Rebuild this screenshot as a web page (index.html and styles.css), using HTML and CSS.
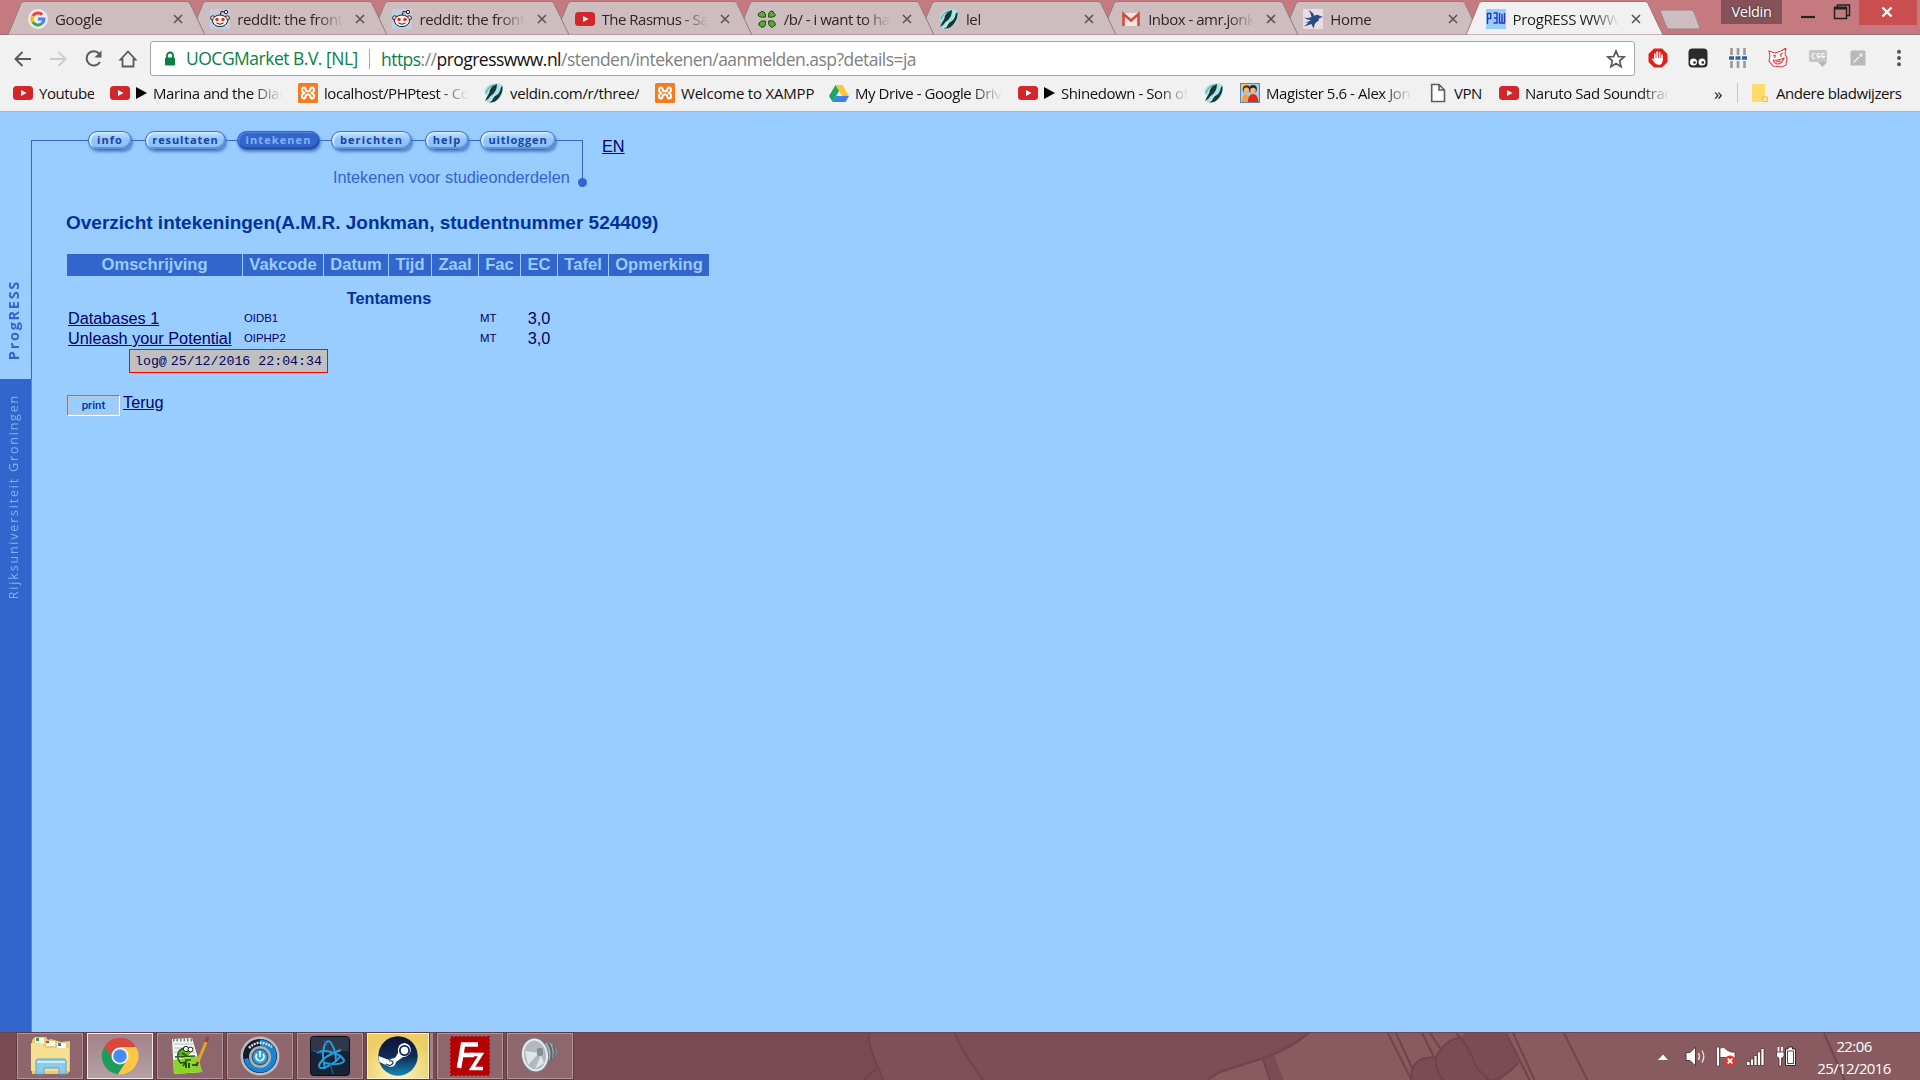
FILE: index.html
```html
<!DOCTYPE html>
<html lang="nl">
<head>
<meta charset="utf-8">
<title>ProgRESS WWW</title>
<link rel="stylesheet" href="styles.css">
</head>
<body>
<svg class="defs" width="0" height="0">
  <defs>
    <symbol id="tab" viewBox="0 0 198 35"><path d="M0 35 L13 3.5 Q14 1.5 16.500 1.500 H179 Q181 1.500 182 3.500 L197 35Z"/></symbol>
    <symbol id="x" viewBox="0 0 10 10"><path d="M1 1L9 9M9 1L1 9" stroke="#5b5355" stroke-width="1.6"/></symbol>
    <symbol id="yt" viewBox="0 0 20 20"><rect y="3" width="20" height="14" rx="3.500" fill="#d2262a"/><path d="M8 7L13.500 10L8 13Z" fill="#fff"/></symbol>
    <symbol id="reddit" viewBox="0 0 20 20"><rect width="20" height="20" fill="#c3cce0"/><path d="M10.500 6L11 2.500L15 3" fill="none" stroke="#222"/><circle cx="16" cy="3" r="1.700" fill="#eee" stroke="#222"/><circle cx="2.800" cy="9" r="2.200" fill="#eee" stroke="#222"/><circle cx="17.200" cy="9" r="2.200" fill="#eee" stroke="#222"/><ellipse cx="10" cy="11.800" rx="7.500" ry="5.800" fill="#f6f3f3" stroke="#222"/><circle cx="7" cy="10.500" r="1.700" fill="#f21"/><circle cx="13" cy="10.500" r="1.700" fill="#f21"/><path d="M6.500 14Q10 16.500 13.500 14" fill="none" stroke="#222"/></symbol>
    <symbol id="feather" viewBox="0 0 20 20"><path d="M0.500 8Q2 1.500 10 .5Q16 -.5 18.500 2Q20.500 9 16 15Q11 20 4 19.500Q1 17 4 12.500Q0 13 .5 8Z" fill="#a5e6e2"/><path d="M13 1Q6 3 5.500 9.500Q3 13.500 1 18Q4 17 6.500 13Q13 9 13 1Z" fill="#17383a"/><path d="M18.500 3Q15 5 14.500 9Q10 12 7.500 18L5 19.500Q12 20 15.500 14Q19 9 18.500 3Z" fill="#17383a"/><path d="M11 2Q4 3 2 10" fill="none" stroke="#4e8486" stroke-width=".9"/><path d="M16 4Q16 10 10 13Q8 15 7 18" fill="none" stroke="#b5f0ee" stroke-width="1.300"/></symbol>
    <symbol id="xampp" viewBox="0 0 20 20"><rect width="20" height="20" rx="1.500" fill="#f47b20"/><path d="M7.500 6Q7.500 4.500 6 4.500Q4 4.500 4 7Q4 9 6 9.500Q6.800 10 6 10.500Q4 11 4 13Q4 15.500 6 15.500Q7.500 15.500 7.500 13.500Q8 11.500 10 11.500T12.500 13.500Q12.500 15.500 14 15.500Q16 15.500 16 13Q16 11 14 10.500Q13.200 10 14 9.500Q16 9 16 7Q16 4.500 14 4.500Q12.500 4.500 12.500 6Q12 8.500 10 8.500T7.500 6Z" fill="none" stroke="#fff" stroke-width="2"/></symbol>
  </defs>
</svg>

<header class="browser">
  <div class="tabstrip">
    <nav class="tabs">
      <div class="tab"><svg class="shape"><use href="#tab"/></svg>
        <svg class="fav" viewBox="0 0 20 20"><circle cx="10" cy="10" r="10" fill="#f2e9ea"/><g fill="none" stroke-width="3"><path d="M14.200 5.600A6 6 0 0 0 4.800 7" stroke="#e94335"/><path d="M4.800 7A6 6 0 0 0 4.800 13" stroke="#f9bb05"/><path d="M4.800 13A6 6 0 0 0 13.800 14.700" stroke="#34a853"/><path d="M13.800 14.700A6 6 0 0 0 16 10H10" stroke="#4285f4"/></g></svg>
        <span class="label">Google</span><svg class="close"><use href="#x"/></svg></div>
      <div class="tab"><svg class="shape"><use href="#tab"/></svg><svg class="fav"><use href="#reddit"/></svg><span class="label">reddit: the front page</span><svg class="close"><use href="#x"/></svg></div>
      <div class="tab"><svg class="shape"><use href="#tab"/></svg><svg class="fav"><use href="#reddit"/></svg><span class="label">reddit: the front page</span><svg class="close"><use href="#x"/></svg></div>
      <div class="tab"><svg class="shape"><use href="#tab"/></svg><svg class="fav"><use href="#yt"/></svg><span class="label tight">The Rasmus - Sail</span><svg class="close"><use href="#x"/></svg></div>
      <div class="tab"><svg class="shape"><use href="#tab"/></svg>
        <svg class="fav" viewBox="0 0 20 20"><g fill="#5dab2c" stroke="#1f4716"><path d="M8.500 8Q2 9 1 6Q1 4 3 4Q4 1 7 3Q9 5 8.500 8ZM11.500 8Q11 3 14 2Q17 2 16.500 4Q19 5 18 7Q15 9 11.500 8ZM8.500 12Q9 18 6 18Q4 19 3.500 17Q1 17 2 14Q4 11 8.500 12ZM11.500 12Q17 11 18 14Q19 17 17 17Q16 19 14 18Q11 17 11.500 12Z"/></g></svg>
        <span class="label tight">/b/ - i want to have</span><svg class="close"><use href="#x"/></svg></div>
      <div class="tab"><svg class="shape"><use href="#tab"/></svg><svg class="fav"><use href="#feather"/></svg><span class="label">lel</span><svg class="close"><use href="#x"/></svg></div>
      <div class="tab"><svg class="shape"><use href="#tab"/></svg>
        <svg class="fav" viewBox="0 0 20 20"><rect x="2" y="4" width="16" height="13" fill="#eee7e7"/><path d="M2.500 17V5L10 11.500L17.500 5V17" fill="none" stroke="#d54b3d" stroke-width="2.600"/></svg>
        <span class="label tight">Inbox - amr.jonkman</span><svg class="close"><use href="#x"/></svg></div>
      <div class="tab"><svg class="shape"><use href="#tab"/></svg>
        <svg class="fav" viewBox="0 0 20 20"><rect width="20" height="20" fill="#eadde2"/><path d="M5.500 1Q10 3 11.500 7Q14 5 16 6.500L20 8L16.500 9Q16 12 13 13.500Q11 15 11 19.500Q9 17.500 8.500 15L1 17.500L5.500 13.500L2 13.500Q6 12.500 8 11Q4 11 1 8.500Q5 9.500 8.500 8Q8 4 5.500 1Z" fill="#2a4a86"/></svg>
        <span class="label">Home</span><svg class="close"><use href="#x"/></svg></div>
      <div class="tab active"><svg class="shape"><use href="#tab"/></svg>
        <svg class="fav" viewBox="0 0 20 20"><rect width="20" height="20" fill="#99ccff"/><path d="M1.500 15V4.500H4.700V9.500H2M7.500 4H11V14H7.500M8 9H11M13.500 4V14H18.500V4M16 5V14" fill="none" stroke="#2437c4" stroke-width="1.400"/></svg>
        <span class="label">ProgRESS WWW</span><svg class="close"><use href="#x"/></svg></div>
    </nav>
    <svg class="newtab" viewBox="0 0 42 21"><path d="M3 1H31Q34 1 35 3L40.500 18Q41 20 39 20H11Q8.500 20 7.500 18L1.500 3Q1 1 3 1Z" fill="#cdbdc0" stroke="#9d868a"/></svg>
    <div class="wincontrols">
      <span class="user">Veldin</span>
      <svg class="wbtns" viewBox="0 0 77 25"><path d="M19 17H33" stroke="#222" stroke-width="2.200"/><path d="M55.500 7V5H67.500V15.500H65" fill="none" stroke="#222" stroke-width="1.500"/><path d="M52.500 8H64.500V18.500H52.500Z" fill="none" stroke="#222" stroke-width="1.500"/><path d="M52 8H65" stroke="#222" stroke-width="3"/></svg>
      <span class="wclose"><svg viewBox="0 0 12 12"><path d="M1.500 1.500L10.500 10.500M10.500 1.500L1.500 10.500" stroke="#fff" stroke-width="2.300"/></svg></span>
    </div>
  </div>

  <div class="toolbar">
    <svg class="navicons" viewBox="0 0 142 34" fill="none" stroke="#5a5a5a" stroke-width="2">
      <path d="M31 17.500H16M22.500 10.500L15.500 17.500L22.500 24.500"/>
      <path d="M50 17.500H65M58.500 10.500L65.500 17.500L58.500 24.500" stroke="#ccc"/>
      <path d="M99.500 12.500A7.200 7.200 0 1 0 100 20.500"/><path d="M101.500 9V16H94.500Z" fill="#5a5a5a" stroke="none"/>
      <path d="M120.500 18L128 10L135.500 18H133.500V25H122.500V18Z" stroke-width="1.800"/>
    </svg>
    <div class="omnibox">
      <svg class="lock" viewBox="0 0 12 16"><path d="M3 7V4.500a3 3 0 0 1 6 0V7" fill="none" stroke="#0b8043" stroke-width="1.800"/><rect x="1" y="6.500" width="10" height="8" rx="1" fill="#0b8043"/></svg>
      <span class="cert">UOCGMarket B.V. [NL]</span>
      <span class="url"><span class="scheme">https</span>://<b>progresswww.nl</b>/stenden/intekenen/aanmelden.asp?details=ja</span>
      <svg class="star" viewBox="0 0 20 20"><path d="M10 2L12.300 7.500L18.200 8L13.700 11.900L15.100 17.700L10 14.600L4.900 17.700L6.300 11.900L1.800 8L7.700 7.500Z" fill="none" stroke="#555" stroke-width="1.700"/></svg>
    </div>
    <div class="exts">
      <svg viewBox="0 0 20 20"><path d="M6 0.500H14L19.500 6V14L14 19.500H6L0.500 14V6Z" fill="#e1201b"/><path d="M6.800 12V6M9.200 11V4M11.600 11V4.500M14 12V7" stroke="#fff" stroke-width="1.600" stroke-linecap="round"/><path d="M6 10H14.800Q15 16.500 11 17Q8 17 6 14L3.800 11Q4.500 10 6 11.500Z" fill="#fff"/></svg>
      <svg viewBox="0 0 20 20"><rect x=".5" y=".5" width="19" height="19" rx="4" fill="#2b2b2b"/><circle cx="5.500" cy="14" r="3.500" fill="#fff"/><circle cx="14" cy="14" r="3.500" fill="#fff"/><circle cx="6.500" cy="14.500" r="1.300" fill="#222"/><circle cx="14.800" cy="14.500" r="1.300" fill="#222"/></svg>
      <svg viewBox="0 0 20 20"><path d="M3.500 0V20M10 0V20M16.500 0V20" stroke="#999" stroke-width="2.600"/><path d="M1 10H19" stroke="#f1f1f1" stroke-width="6"/><path d="M1 10H19" stroke="#2e64a5" stroke-width="3.600" stroke-dasharray="5 1.500"/></svg>
      <svg viewBox="0 0 20 20" fill="none" stroke="#e03e42" stroke-width="1.100"><path d="M1 3L7 5L13 3L18 0L17 6L19 10L18 17L14 19L5 18L1 13L2 8Z" fill="#fff"/><path d="M5 8L8 7M12 7L15 5M7 8V10M13 7V9M5 12Q10 13 16 10Q14 16 9 16Q6 15 5 12M8 14L13 13"/></svg>
      <svg viewBox="0 0 20 20"><rect x="1" y="2" width="18" height="12" rx="2" fill="#c6c6c6"/><path d="M7 6Q4 5 4 8T7 10M12 6Q9 5 9 7T11.500 8.500T9 10M16.500 6Q13.500 5 13.500 7T16 8.500T13.500 10" fill="none" stroke="#fff" stroke-width="1.100"/><path d="M10 14H19L14.500 19Z" fill="#b5b5b5"/></svg>
      <svg viewBox="0 0 20 20"><rect x="2.500" y="2.500" width="15" height="15" rx="1.500" fill="#b8b8b8"/><path d="M5.500 14.500L11 9M13 5V9M11 7H15" stroke="#f4f4f4" stroke-width="1.200"/></svg>
      <svg viewBox="0 0 20 20" fill="#555"><circle cx="11" cy="3.700" r="2"/><circle cx="11" cy="10" r="2"/><circle cx="11" cy="16.300" r="2"/></svg>
    </div>
  </div>

  <div class="bookmarks">
    <a><svg><use href="#yt"/></svg><span>Youtube</span></a>
    <a><svg><use href="#yt"/></svg><i></i><span>Marina and the Diamonds</span></a>
    <a><svg><use href="#xampp"/></svg><span>localhost/PHPtest - Con</span></a>
    <a><svg><use href="#feather"/></svg><span>veldin.com/r/three/</span></a>
    <a><svg><use href="#xampp"/></svg><span>Welcome to XAMPP</span></a>
    <a><svg viewBox="0 0 20 20"><path d="M6.500 2H13.500L20 13H13Z" fill="#fbc92f"/><path d="M6.500 2L10 8L3.500 19L0 13Z" fill="#1da362"/><path d="M3.500 19L7 13H20L16.500 19Z" fill="#3f7fe8"/></svg><span>My Drive - Google Drive</span></a>
    <a><svg><use href="#yt"/></svg><i></i><span>Shinedown - Son of Sam</span></a>
    <a><svg><use href="#feather"/></svg></a>
    <a><svg viewBox="0 0 20 20"><rect x=".5" y=".5" width="19" height="19" fill="#9fd0ee" stroke="#58a"/><path d="M1 1H8V6H1ZM1 12H6V19H1Z" fill="#f3d04c"/><circle cx="6.500" cy="6" r="3.800" fill="#5a2f22"/><circle cx="6.500" cy="7.300" r="2.700" fill="#efb78c"/><circle cx="13" cy="6" r="3.900" fill="#3d2417"/><circle cx="13" cy="7.500" r="2.800" fill="#f0b58a"/><path d="M2 19Q2 11 6 11Q9 11 9 19Z" fill="#f0a04a"/><path d="M8 19Q8 11 13 11T18.500 19Z" fill="#e3281c"/></svg><span>Magister 5.6 - Alex Jonk</span></a>
    <a><svg viewBox="0 0 20 20"><path d="M3.700 1.500H11L16.500 7V18.500H3.700ZM11 1.500V7H16.500" fill="#fff" stroke="#5c5c5c" stroke-width="1.600"/></svg><span>VPN</span></a>
    <a><svg><use href="#yt"/></svg><span>Naruto Sad Soundtrack</span></a>
    <a class="more">»</a>
    <a class="other"><svg viewBox="0 0 20 20"><path d="M2 1H15V14H17.500V19H2Z" fill="#fddc6b"/><path d="M12.500 14H17.500V18.500H13Z" fill="#ffe99a" stroke="#e9c04c"/></svg><span>Andere bladwijzers</span></a>
  </div>
</header>

<main class="page">
  <aside class="side">
    <div class="brand"><span>ProgRESS</span></div>
    <div class="uni"><span>Rijksuniversiteit Groningen</span></div>
  </aside>
  <div class="content">
    <div class="menurow">
      <nav class="menu">
        <a>info</a><a>resultaten</a><a class="on">intekenen</a><a>berichten</a><a>help</a><a>uitloggen</a>
      </nav>
      <a class="lang">EN</a>
    </div>
    <p class="sub">Intekenen voor studieonderdelen</p>
    <h1>Overzicht intekeningen(A.M.R. Jonkman, studentnummer 524409)</h1>
    <table>
      <colgroup><col class="c1"><col class="c2"><col class="c3"><col class="c4"><col class="c5"><col class="c6"><col class="c7"><col class="c8"><col class="c9"></colgroup>
      <thead><tr><th>Omschrijving</th><th>Vakcode</th><th>Datum</th><th>Tijd</th><th>Zaal</th><th>Fac</th><th>EC</th><th>Tafel</th><th>Opmerking</th></tr></thead>
      <tbody>
        <tr class="group"><td colspan="9">Tentamens</td></tr>
        <tr><td><a>Databases 1</a></td><td class="s">OIDB1</td><td></td><td></td><td></td><td class="s">MT</td><td class="ec">3,0</td><td></td><td></td></tr>
        <tr><td><a>Unleash your Potential</a></td><td class="s">OIPHP2</td><td></td><td></td><td></td><td class="s">MT</td><td class="ec">3,0</td><td></td><td></td></tr>
      </tbody>
    </table>
    <div class="log"><span>log@</span><span>25/12/2016 22:04:34</span></div>
    <div class="actions"><button>print</button><a>Terug</a></div>
  </div>
</main>

<footer class="taskbar">
  <svg class="wall" viewBox="0 0 1920 48" preserveAspectRatio="none">
    <path d="M868 0Q866 10 878 34L884 48H984L970 20L955 0Z" fill="#805058"/>
    <path d="M955 0L966 24L984 48H1206Q1214 38 1226 35L1262 24Q1290 12 1309 0Z" fill="#7d4e55"/>
    <path d="M1309 0Q1290 14 1264 24L1220 38Q1212 42 1206 48H1920V0Z" fill="#875b60"/>
    <path d="M1263 26L1270 48H1284L1274 22ZM1412 48Q1410 24 1436 24Q1444 8 1462 4L1465 0H1507L1519 30L1500 48Z" fill="#7c4c54"/>
    <g fill="none" stroke="#70444a" stroke-width="2"><path d="M870 0Q866 8 878 34L884 48M878 34L862 48M955 0Q962 20 984 48M1309 0Q1290 16 1264 25L1220 39L1206 48M1263 26L1270 48M1388 0L1412 48M1396 0L1413 37M1422 0L1434 24M1430 0L1440 15M1412 48Q1408 24 1436 24Q1444 8 1460 4L1456 0M1436 24Q1434 36 1444 48M1460 4Q1468 12 1476 34L1490 48Q1506 44 1518 30M1506 0L1530 48M1513 0L1535 48M1564 0L1588 48M1824 0L1845 48"/></g>
  </svg>
  <div class="apps">
    <div class="app"><svg viewBox="0 0 40 40"><path d="M2 4L5 1H16L18 4L21 3L31 6L40 5V35L37 38H2Z" fill="#e7cc72"/><path d="M5 2H14V8H5Z" fill="#fbfbf0"/><path d="M16 5H25V10H16Z" fill="#fff"/><path d="M27 7H36V12H27Z" fill="#fff"/><path d="M6 2H9V5H6Z" fill="#3a9d43"/><path d="M16 5H19V7H16Z" fill="#d43b2c"/><path d="M28 7H31V10H28Z" fill="#287cd4"/><path d="M1 7H11L16 12H39V35H1Z" fill="#f5df91"/><path d="M6 25Q6 23 8 23H34Q36 23 36 25V38H29V32H14V38H6Z" fill="#8ccbe9" stroke="#5da6cd"/><path d="M7 25H35V27H7Z" fill="#cbeefa"/></svg></div>
    <div class="app current"><svg viewBox="0 0 40 40"><path d="M4.100 10.900A18.400 18.400 0 0 0 18 38.300L28 22L20 20Z" fill="#1e9c5c"/><path d="M36 10.900A18.400 18.400 0 0 1 18 38.300L28 23L22 10.900Z" fill="#fbc745"/><path d="M4.100 10.900A18.400 18.400 0 0 1 36 10.900H20L11.500 20Z" fill="#d9483b"/><circle cx="20" cy="20" r="8.500" fill="#fff"/><circle cx="20" cy="20" r="6.800" fill="#4a8af4"/></svg></div>
    <div class="app"><svg viewBox="0 0 40 40"><path d="M2 3L22 2L32 36L4 38Z" fill="#f5f8ef"/><path d="M3 24L28 20L32 36L4 38Z" fill="#8bd42b"/><path d="M4 8H23M4 12H24M4 16H25" stroke="#a9bfd0"/><path d="M3 4H22" stroke="#777" stroke-width="3" stroke-dasharray="1.500 2"/><path d="M8 19Q8 12 14 12L21 16Q19 21 12 22Z" fill="#61b51d"/><path d="M15 12Q9 13 8 18Q7 24 11 27L16 26L13 30M5 21L25 20M12 17L17 20M15 24H21" fill="none" stroke="#235c16" stroke-width="1.700"/><circle cx="16" cy="13" r="2.600" fill="#fff" stroke="#222"/><circle cx="20.500" cy="13.500" r="2.400" fill="#fff" stroke="#222"/><path d="M16 27V32M19 27V32M22 29H28" stroke="#143b0c" stroke-width="1.700"/><path d="M37 4L27 28" stroke="#e7a520" stroke-width="3"/><path d="M38 1L36 6" stroke="#a34138" stroke-width="3.500"/><path d="M28 26L26 30" stroke="#532" stroke-width="2"/></svg></div>
    <div class="app"><svg viewBox="0 0 40 40"><circle cx="20" cy="20" r="19.500" fill="#bcbec2"/><circle cx="20" cy="20" r="17" fill="#101b2b"/><path d="M4 23A16.500 16.500 0 0 0 20 36.500V32Q11 31 8 22ZM20 3.500A16.500 16.500 0 0 1 20 36.500V30A10 10 0 0 0 20 10Z" fill="#1686d6"/><path d="M9 12Q19 2 32 11" fill="none" stroke="#ddd" stroke-width="2.500" stroke-dasharray="2 1"/><circle cx="20" cy="21" r="11" fill="#aeb4b9"/><circle cx="20" cy="21" r="8.500" fill="#455766"/><circle cx="20" cy="21" r="7" fill="#29a9e7"/><path d="M17 18A4 4 0 1 0 23 18M20 15V21" fill="none" stroke="#fff" stroke-width="1.700"/></svg></div>
    <div class="app"><svg viewBox="0 0 40 40"><rect x=".5" y=".5" width="39" height="39" rx="3" fill="#172334" stroke="#0a1019"/><path d="M1 3Q1 1 3 1H37Q39 1 39 3V15H1Z" fill="#30374a"/><g fill="none" stroke="#22a3e1" stroke-width="1.900"><path d="M15 33Q11 17 15 8Q18 3 21 7Q26 14 26 26"/><path d="M7 17Q14 13 24 17Q34 21 34 25Q31 30 14 27"/><path d="M31 14Q13 20 9 29Q9 34 16 31Q26 27 31 19"/></g><path d="M3 15L12 17M14 4L17 9M20 27L23 38" stroke="#0d74b5"/></svg></div>
    <div class="app alert"><svg viewBox="0 0 40 40"><defs><linearGradient id="st" x2="0" y2="1"><stop offset="0" stop-color="#101234"/><stop offset=".5" stop-color="#0d2b56"/><stop offset="1" stop-color="#1685b3"/></linearGradient></defs><circle cx="20" cy="20" r="19.700" fill="url(#st)"/><path d="M0.500 20L11 24Q14 22 17 22L20 17Q19 7 27 7Q34 9 32.500 16Q30 21 25 21L18 26Q17 32 11 30.500L1.500 26Z" fill="#fff"/><circle cx="26.500" cy="14.500" r="4.600" fill="#fff" stroke="#123058" stroke-width="1.800"/><path d="M8 28Q13 31 15 27Q15 24 11 25" fill="none" stroke="#123058" stroke-width="1.200"/></svg></div>
    <div class="app"><svg viewBox="0 0 40 40"><rect x="1" y="1" width="38" height="38" fill="#b40000" stroke="#b40000" stroke-width="2" stroke-dasharray="2.500 1.500"/><path d="M9 32L13 8.500H28M11 19H24" fill="none" stroke="#fff" stroke-width="4.600"/><path d="M20 18.500H31L22 32.500H33" fill="none" stroke="#fff" stroke-width="3.600"/></svg></div>
    <div class="app"><svg viewBox="0 0 40 40"><path d="M20 10L28 6Q36 8 37 16Q37 21 33 22L20 30Z" fill="#a7adb2" stroke="#777f86"/><path d="M28 7Q33 13 31 24M33 9Q36 15 34 21" fill="none" stroke="#5c646c" stroke-width="2"/><ellipse cx="15" cy="19" rx="13.500" ry="17" fill="#e9edf0" stroke="#777f86" transform="rotate(-8 15 19)"/><ellipse cx="15" cy="19" rx="11" ry="14.500" fill="#b2bac1" transform="rotate(-8 15 19)"/><path d="M5 15L19 17L8 29ZM15 33L21 19L24 27Z" fill="#dfe5e9"/><rect x="17" y="12" width="6" height="8" rx="2" fill="#868f97"/></svg></div>
  </div>
  <div class="tray">
    <svg viewBox="0 0 150 30" fill="#fff">
      <path d="M3 18L8 12.500L13 18Z"/>
      <path d="M31 10.500H35L40.500 5V24L35 18.500H31Z" stroke="#5a3539"/><path d="M43.500 11Q45.500 14.500 43.500 18M47 8.500Q50.500 14.500 47 20.500" fill="none" stroke="#ead9db" stroke-width="1.400"/>
      <path d="M61.500 5H64.500V24H61.500ZM65 6Q69 4 72 8Q76 11 80 10V17Q74 18 71 15.500L65 15.500Z" stroke="#5a3539" stroke-width=".8"/><circle cx="75" cy="19" r="5.500" fill="#dd3b2f"/><path d="M72.700 16.700L77.300 21.300M77.300 16.700L72.700 21.300" stroke="#fff" stroke-width="1.700"/>
      <path d="M91.500 19.500H95V23.500H91.500ZM95.500 17H98.500V23.500H95.500ZM99 13.500H102V23.500H99ZM102.500 10H105.500V23.500H102.500ZM106 6.500H109V23.500H106Z" stroke="#4a2d30" stroke-width=".7"/>
      <path d="M123.500 5V10M127 5V10" stroke="#fff" stroke-width="1.700"/><path d="M121.500 10H129V14Q128 16 126.500 16V24H124V16Q122.500 16 121.500 14Z" stroke="#4a2d30" stroke-width=".8"/><path d="M130.500 7H133V5H137.500V7H140.500V23.500H130.500Z" stroke="#3a2225"/><path d="M132.500 9H138.500V21.500H132.500Z" fill="#fff" stroke="#4a2d30" stroke-width=".9"/>
    </svg>
    <div class="clock"><span>22:06</span><span>25/12/2016</span></div>
  </div>
</footer>
</body>
</html>
```
FILE: styles.css
```css
* { box-sizing: border-box; }
body {
  margin: 0;
  width: 1920px;
  height: 1080px;
  overflow: hidden;
  display: flex;
  flex-direction: column;
  font-family: "Liberation Sans", Arial, sans-serif;
}
svg { display: block; flex: none; }
.defs { position: absolute; }

/* browser chrome */
.browser {
  height: 112px;
  flex: none;
  background: #f1f1f1;
  border-bottom: 1px solid #b6b4b0;
  font-family: "Open Sans", "Noto Sans", sans-serif;
  font-size: 15px;
  color: #111;
}
.tabstrip {
  height: 35px;
  display: flex;
  background: #c57a80;
  box-shadow: inset 0 -1px #8f7276;
}
.tabs { display: flex; padding-left: 8px; }
.tab {
  position: relative;
  isolation: isolate;
  width: 198.200px;
  height: 35px;
  margin-right: -16px;
  padding: 2px 0 0 20px;
  display: flex;
  align-items: center;
  color: #2e2528;
}
.tab:nth-child(1) { z-index: 8; }
.tab:nth-child(2) { z-index: 7; }
.tab:nth-child(3) { z-index: 6; }
.tab:nth-child(4) { z-index: 5; }
.tab:nth-child(5) { z-index: 4; }
.tab:nth-child(6) { z-index: 3; }
.tab:nth-child(7) { z-index: 2; }
.tab:nth-child(8) { z-index: 1; }
.tab.active { z-index: 9; color: #222; }
.shape {
  position: absolute;
  left: 0;
  top: 0;
  width: 198px;
  height: 35px;
  z-index: -1;
  fill: #cdbdbf;
  stroke: #98787c;
}
.active .shape { fill: #f1f1f1; }
.fav { width: 20px; height: 20px; }
.label {
  width: 105px;
  margin: 0 13px 0 7px;
  white-space: nowrap;
  overflow: hidden;
  letter-spacing: -0.35px;
  line-height: 20px;
  -webkit-mask-image: linear-gradient(90deg, #000 80px, transparent 106px);
  mask-image: linear-gradient(90deg, #000 80px, transparent 106px);
}
.label.tight { letter-spacing: -0.5px; }
.close { width: 10px; height: 10px; }
.newtab { width: 42px; height: 21px; margin: 9px 0 0 11px; }
.wincontrols { display: flex; margin-left: auto; padding-right: 3px; height: 25px; }
.user {
  width: 61px;
  height: 24px;
  background: #845258;
  color: #fff;
  font-size: 14.5px;
  line-height: 23px;
  text-align: center;
  letter-spacing: -0.3px;
  text-shadow: 0 0 2px #222;
}
.wbtns { width: 77px; height: 25px; }
.wclose {
  width: 58px;
  height: 25px;
  background: #c94f50;
  display: flex;
  align-items: center;
  justify-content: center;
}
.wclose svg { width: 12px; height: 12px; margin: 0 3px 2px 0; }

.toolbar { display: flex; height: 41px; padding-top: 6px; }
.navicons { width: 142px; height: 35px; }
.omnibox {
  width: 1485px;
  height: 35px;
  margin-left: 8px;
  padding: 0 8px 0 13px;
  display: flex;
  align-items: center;
  background: #fff;
  border: 1px solid #a6a6a6;
  border-radius: 3px;
  font-size: 17.500px;
}
.lock { width: 12px; height: 16px; }
.cert {
  margin-left: 10px;
  width: 184px;
  height: 20px;
  line-height: 19px;
  border-right: 1px solid #aaa;
  color: #0b8043;
  white-space: nowrap;
  letter-spacing: -0.5px;
}
.url { margin-left: 11px; color: #808080; letter-spacing: -0.53px; white-space: nowrap; line-height: 20px; }
.url b { font-weight: 400; color: #111; }
.url .scheme { color: #0b8043; }
.star { width: 20px; height: 20px; margin-left: auto; }
.exts { display: flex; gap: 20px; padding: 7px 0 0 13px; }
.exts svg { width: 20px; height: 20px; }

.bookmarks {
  height: 34px;
  padding-left: 13px;
  display: grid;
  grid-template-columns: 97px 188px 186px 171px 174px 189px 186px 36px 188px 71px 215px 23px 160px;
  align-items: center;
}
.bookmarks a { display: flex; align-items: center; gap: 6px; white-space: nowrap; }
.bookmarks svg { width: 20px; height: 20px; }
.bookmarks span { letter-spacing: -0.43px; overflow: hidden; margin-right: 16px; line-height: 20px; }
.bookmarks a:nth-child(4) span { letter-spacing: -0.35px; }
.bookmarks a:nth-child(5) span { letter-spacing: -0.2px; margin-right: 0; }
.bookmarks a:nth-child(2) span,
.bookmarks a:nth-child(3) span,
.bookmarks a:nth-child(6) span,
.bookmarks a:nth-child(7) span,
.bookmarks a:nth-child(9) span {
  -webkit-mask-image: linear-gradient(270deg, transparent, #000 30px);
  mask-image: linear-gradient(270deg, transparent, #000 30px);
}
.bookmarks a:nth-child(11) span {
  width: 144px;
  -webkit-mask-image: linear-gradient(270deg, transparent, #000 28px);
  mask-image: linear-gradient(270deg, transparent, #000 28px);
}
.bookmarks i { border: 6px solid transparent; border-left: 11px solid #000; border-right: 0; }
.more { font-size: 17px; }
.bookmarks .other { border-left: 1px solid #c8c8c8; padding-left: 12px; height: 20px; }
.bookmarks .other span { margin: 0; overflow: visible; }

/* page */
.page { height: 920px; flex: none; display: flex; background: #99ccff; color: #000066; font-size: 16.25px; }
.side { width: 32px; display: flex; flex-direction: column; }
.side span { writing-mode: vertical-rl; transform: rotate(180deg); white-space: nowrap; }
.brand {
  height: 239px;
  margin-top: 28px;
  border-right: 1px solid #3366cc;
  padding: 140px 0 0 5px;
  color: #3366cc;
  font: bold 14.500px/18px "Open Sans", sans-serif;
  letter-spacing: 1.7px;
}
.uni {
  flex: 1;
  background: #3366cc;
  border-right: 1px solid #5588dd;
  padding: 15px 0 0 5px;
  color: #80b3f2;
  font: 12.500px/18px "Open Sans", sans-serif;
  letter-spacing: 1.8px;
}
.content { display: flex; flex-direction: column; align-items: flex-start; }
.menurow { display: flex; margin-top: 19px; }
.menu {
  position: relative;
  display: flex;
  gap: 11px;
  width: 551px;
  height: 20px;
  padding-left: 56px;
}
.menu::before {
  content: "";
  position: absolute;
  left: 0;
  right: 0;
  top: 9px;
  height: 40px;
  border-top: 1px solid #3366cc;
  border-right: 1px solid #3366cc;
}
.menu::after {
  content: "";
  position: absolute;
  right: -4px;
  top: 47px;
  width: 9px;
  height: 9px;
  border-radius: 50%;
  background: #3366cc;
}
.menu a {
  position: relative;
  height: 19px;
  border: 1px solid #4070c4;
  border-radius: 10px;
  background: linear-gradient(#c3e2ff, #93c4fb 45%, #8ec0f6);
  box-shadow: inset 2px 1px 1px #d9eeff, inset -1px -2px 1px #5d92dc, 1px 2px 3px #4f83c4;
  color: #17469c;
  font: bold 11px/15px "Open Sans", sans-serif;
  letter-spacing: 1.100px;
  text-align: center;
}
.menu a:nth-child(1) { width: 44px; margin-right: 2px; }
.menu a:nth-child(2) { width: 81px; letter-spacing: 0.9px; }
.menu a:nth-child(3) { width: 83px; }
.menu a:nth-child(4) { width: 81px; margin-right: 2px; }
.menu a:nth-child(5) { width: 44px; }
.menu a:nth-child(6) { width: 76px; letter-spacing: 0.8px; }
.menu a.on {
  background: #3366cc;
  color: #80b2f5;
  border-color: #3264c6;
  box-shadow: inset 1px 1px 1px #5588dd, inset -1px -2px 1px #2450a8, 1px 2px 3px #4f83c4;
}
.lang { margin: 6px 0 0 19px; text-decoration: underline; line-height: 18px; }
.sub { margin: 12px 0 0 301px; line-height: 20px; color: #3366cc; }
h1 { margin: 25px 0 0 34px; font-size: 19px; line-height: 22px; color: #003399; white-space: nowrap; }
table { margin: 20px 0 0 35px; border-collapse: collapse; table-layout: fixed; width: 642px; }
.c1 { width: 176px; } .c2 { width: 81px; } .c3 { width: 65px; } .c4 { width: 43px; } .c5 { width: 47px; }
.c6 { width: 42px; } .c7 { width: 37px; } .c8 { width: 51px; } .c9 { width: 100px; }
th {
  height: 22px;
  padding: 0 1px 0 0;
  background: #3366cc;
  color: #99ccff;
  font-size: 16.6px;
  line-height: 20px;
  box-shadow: inset -1px 0 #99ccff;
}
th:last-child { box-shadow: none; padding: 0; }
td { height: 20px; padding: 0 1px; line-height: 20px; white-space: nowrap; }
.group td { height: 32px; padding: 12px 0 0 2px; text-align: center; font-weight: bold; color: #003399; }
td a, .actions a { text-decoration: underline; }
.s { font-size: 11.4px; }
.ec { text-align: center; padding-right: 2px; }
.log {
  display: flex;
  gap: 4px;
  align-items: center;
  width: 199px;
  height: 24px;
  margin: 1px 0 0 97px;
  padding-left: 5px;
  border: 1px solid #f00;
  background: #c0c0c0;
  font: 13.250px "Liberation Mono", monospace;
  white-space: nowrap;
}
.actions { display: flex; margin: 20px 0 0 35px; gap: 3px; line-height: 18px; }
.actions button {
  width: 53px;
  height: 21px;
  margin-top: 2px;
  padding: 0 0 1px;
  border: 1px solid;
  border-color: #808080 #fff #fff #808080;
  box-shadow: inset 0 0 0 1px #c0c8d0;
  background: #99ccff;
  color: #003399;
  font: 500 11.500px Roboto, sans-serif;
}

/* taskbar */
.taskbar {
  position: relative;
  height: 48px;
  flex: none;
  display: flex;
  justify-content: space-between;
  background: #784a51;
  border-top: 1px solid #6a474f;
}
.wall { position: absolute; left: 0; top: 0; width: 1920px; height: 48px; }
.apps { position: relative; display: flex; gap: 4px; padding-left: 17px; }
.app {
  width: 66px;
  height: 46px;
  display: flex;
  align-items: center;
  justify-content: center;
  background: #8d676d;
  border: 1px solid #b0959a;
  outline: 1px solid #633a42;
}
.app svg { width: 40px; height: 40px; }
.current { background: linear-gradient(#a18388, #b5a0a4); border: 1px solid #f4eeee; }
.alert { background: radial-gradient(circle at 50% 90%, #fff6c6, #ecce65 75%); border: 1px solid #fff6cf; width: 62px; margin-right: 4px; box-shadow: 4px 0 #a48388; }
.tray { position: relative; display: flex; align-items: center; }
.tray svg { width: 150px; height: 30px; }
.clock {
  width: 76px;
  margin: 0 28px 0 11px;
  display: flex;
  flex-direction: column;
  align-items: center;
  color: #fff;
  font: 15px/22px "Open Sans", sans-serif;
  letter-spacing: -0.6px;
  white-space: nowrap;
}
```
